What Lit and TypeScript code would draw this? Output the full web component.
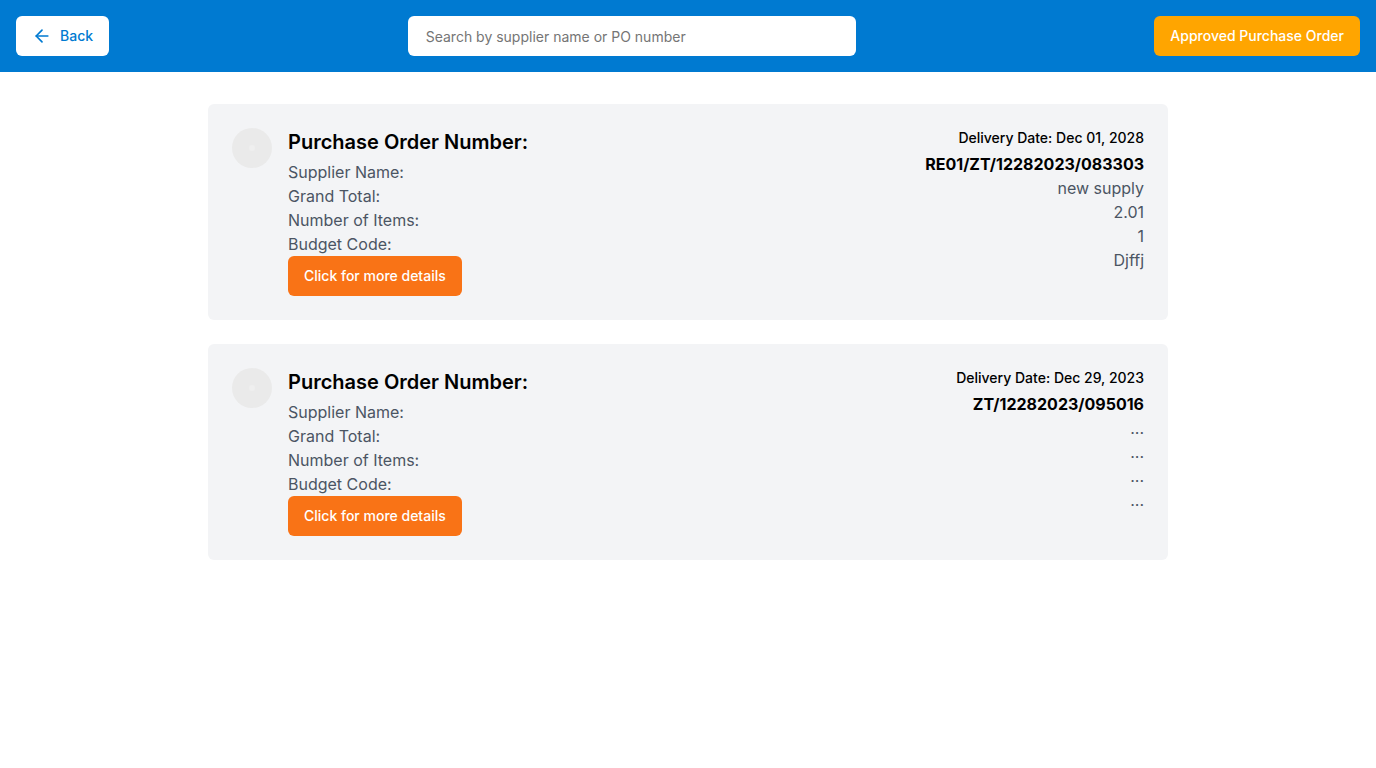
import { LitElement, html, css } from "lit";
import { customElement, property, state } from "lit/decorators.js";

interface PurchaseOrder {
  number: string;
  supplier: string;
  total: string;
  items: string;
  budget: string;
  delivery: string;
}

const ORDERS: PurchaseOrder[] = [
  { number: "RE01/ZT/12282023/083303", supplier: "new supply", total: "2.01", items: "1", budget: "Djffj", delivery: "Dec 01, 2028" },
  { number: "ZT/12282023/095016", supplier: "...", total: "...", items: "...", budget: "...", delivery: "Dec 29, 2023" },
];

const button = css`
  button {
    display: inline-flex;
    align-items: center;
    justify-content: center;
    height: 40px;
    padding: 0 16px;
    border: 0;
    border-radius: 6px;
    font: 500 14px/20px Inter, sans-serif;
    white-space: nowrap;
    cursor: pointer;
  }
`;

@customElement("order-card")
export class OrderCard extends LitElement {
  @property({ attribute: false }) order!: PurchaseOrder;

  static styles = [
    button,
    css`
      :host { display: block; }
      .card {
        display: flex;
        align-items: flex-start;
        gap: 16px;
        padding: 24px;
        border-radius: 6px;
        background: #f3f4f6;
      }
      .avatar { width: 40px; height: 40px; flex: none; }
      .labels { flex: 1; }
      h2 { margin: 0 0 4px; font-size: 20px; line-height: 28px; font-weight: 600; }
      p { margin: 0; color: #4b5563; }
      .values { text-align: right; }
      .values .date { color: #000; font-size: 14px; line-height: 20px; font-weight: 500; margin-bottom: 4px; }
      .values .number { color: #000; font-weight: 700; }
      .details { background: #f97316; color: #fff; }
    `,
  ];

  render() {
    const o = this.order;
    return html`
      <article class="card">
        <svg class="avatar" viewBox="0 0 40 40" aria-hidden="true">
          <circle cx="20" cy="20" r="20" fill="#eaeaea" />
          <circle cx="20" cy="20" r="3" fill="#efefef" />
        </svg>
        <div class="labels">
          <h2>Purchase Order Number:</h2>
          <p>Supplier Name:</p>
          <p>Grand Total:</p>
          <p>Number of Items:</p>
          <p>Budget Code:</p>
          <button class="details" type="button">Click for more details</button>
        </div>
        <div class="values">
          <p class="date">Delivery Date: ${o.delivery}</p>
          <p class="number">${o.number}</p>
          <p>${o.supplier}</p>
          <p>${o.total}</p>
          <p>${o.items}</p>
          <p>${o.budget}</p>
        </div>
      </article>
    `;
  }
}

@customElement("app-root")
export class AppRoot extends LitElement {
  @state() private query = "";

  static styles = [
    button,
    css`
      :host {
        display: block;
        min-height: 100vh;
        background: #fff;
        color: #000;
        font: 400 16px/24px Inter, sans-serif;
      }
      header {
        display: flex;
        align-items: center;
        justify-content: space-between;
        gap: 16px;
        padding: 16px;
        background: #007ad1;
      }
      .back { background: #fff; color: #007ad1; gap: 8px; }
      .approved { background: #ffa500; color: #fff; }
      .arrow { width: 20px; height: 20px; }
      input {
        box-sizing: border-box;
        flex: 0 1 448px;
        min-width: 0;
        height: 40px;
        padding: 0 18px;
        border: 0;
        border-radius: 6px;
        background: #fff;
        color: #000;
        font: 400 14px/20px Inter, sans-serif;
      }
      input::placeholder { color: #757575; opacity: 1; }
      main {
        display: grid;
        gap: 24px;
        max-width: 960px;
        margin: 0 auto;
        padding: 32px 0;
      }
    `,
  ];

  render() {
    const q = this.query.toLowerCase();
    const shown = ORDERS.filter((o) => (o.number + " " + o.supplier).toLowerCase().includes(q));
    return html`
      <header>
        <button class="back" type="button">
          <svg class="arrow" viewBox="0 0 24 24" fill="none" stroke="currentColor" stroke-width="2" stroke-linecap="round" stroke-linejoin="round" aria-hidden="true">
            <path d="m12 19-7-7 7-7" /><path d="M19 12H5" />
          </svg>
          Back
        </button>
        <input
          type="text"
          aria-label="Search purchase orders"
          placeholder="Search by supplier name or PO number"
          .value=${this.query}
          @input=${(e: Event) => (this.query = (e.target as HTMLInputElement).value)}
        />
        <button class="approved" type="button">Approved Purchase Order</button>
      </header>
      <main>${shown.map((o) => html`<order-card .order=${o}></order-card>`)}</main>
    `;
  }
}
